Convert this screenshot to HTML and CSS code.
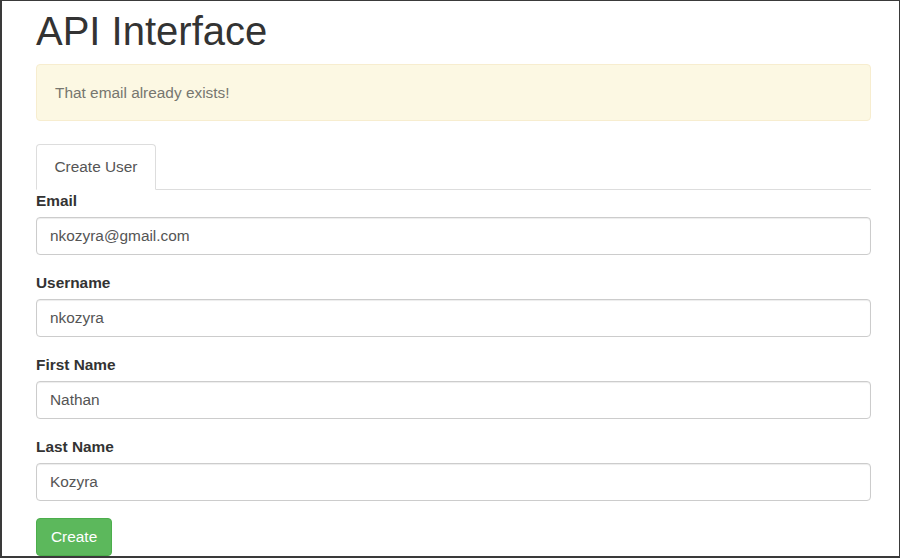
FILE: index.html
```html
<!DOCTYPE html>
<html>
<head>
<meta charset="utf-8">
<title>API Interface</title>
<link rel="stylesheet" href="styles.css">
</head>
<body>
<div class="frame">
  <div class="container">
    <h1 class="title">API Interface</h1>
    <div class="alert">That email already exists!</div>
    <ul class="tabs">
      <li class="tab active">Create User</li>
    </ul>
    <form class="form">
      <div class="group">
        <label class="label">Email</label>
        <input class="input" type="text" value="nkozyra@gmail.com">
      </div>
      <div class="group">
        <label class="label">Username</label>
        <input class="input" type="text" value="nkozyra">
      </div>
      <div class="group">
        <label class="label">First Name</label>
        <input class="input" type="text" value="Nathan">
      </div>
      <div class="group">
        <label class="label">Last Name</label>
        <input class="input" type="text" value="Kozyra">
      </div>
      <button class="btn" type="button">Create</button>
    </form>
  </div>
</div>
</body>
</html>
```
FILE: styles.css
```css
* { box-sizing: border-box; }
html, body { margin: 0; padding: 0; background: #fff; }
body {
  font-family: "Liberation Sans", Arial, sans-serif;
  font-size: 15.4px;
  line-height: 22px;
  color: #333;
}
.frame {
  width: 900px;
  height: 558px;
  border-top: 1px solid #3a3a3a;
  border-left: 2px solid #3a3a3a;
  border-right: 1px solid #3a3a3a;
  border-bottom: 2px solid #3a3a3a;
  overflow: hidden;
  padding: 8px 28px 0 34px;
}
.container { display: flex; flex-direction: column; }
.title {
  margin: 0;
  font-size: 40px;
  line-height: 44px;
  font-weight: 400;
  color: #333;
}
.alert {
  margin: 11px 0 23px;
  padding: 16.5px 18px;
  background: #fcf8e3;
  border: 1px solid #f7edcf;
  border-radius: 4px;
  color: #76766f;
  line-height: 22px;
}
.tabs {
  list-style: none;
  margin: 0;
  padding: 0;
  display: flex;
  border-bottom: 1px solid #ddd;
}
.tab {
  padding: 11px 17.5px;
  line-height: 22px;
  color: #555;
  margin-bottom: -1px;
  border: 1px solid transparent;
  border-radius: 4px 4px 0 0;
}
.tab.active {
  border-color: #ddd;
  border-bottom-color: #fff;
  background: #fff;
}
.form { display: flex; flex-direction: column; align-items: flex-start; }
.group {
  display: flex;
  flex-direction: column;
  align-self: stretch;
  margin-bottom: 17px;
}
.label {
  font-weight: 700;
  line-height: 22px;
  margin-bottom: 5px;
  color: #333;
}
.input {
  height: 38px;
  padding: 0 13px;
  font-family: "Liberation Sans", Arial, sans-serif;
  font-size: 15.4px;
  color: #555;
  border: 1px solid #ccc;
  border-radius: 4px;
  box-shadow: inset 0 1px 1px rgba(0,0,0,.075);
  background: #fff;
  outline: none;
}
.btn {
  height: 38px;
  padding: 0 14px;
  font-family: "Liberation Sans", Arial, sans-serif;
  font-size: 15.4px;
  color: #fff;
  background: #5cb85c;
  border: 1px solid #4cae4c;
  border-radius: 4px;
}
```
